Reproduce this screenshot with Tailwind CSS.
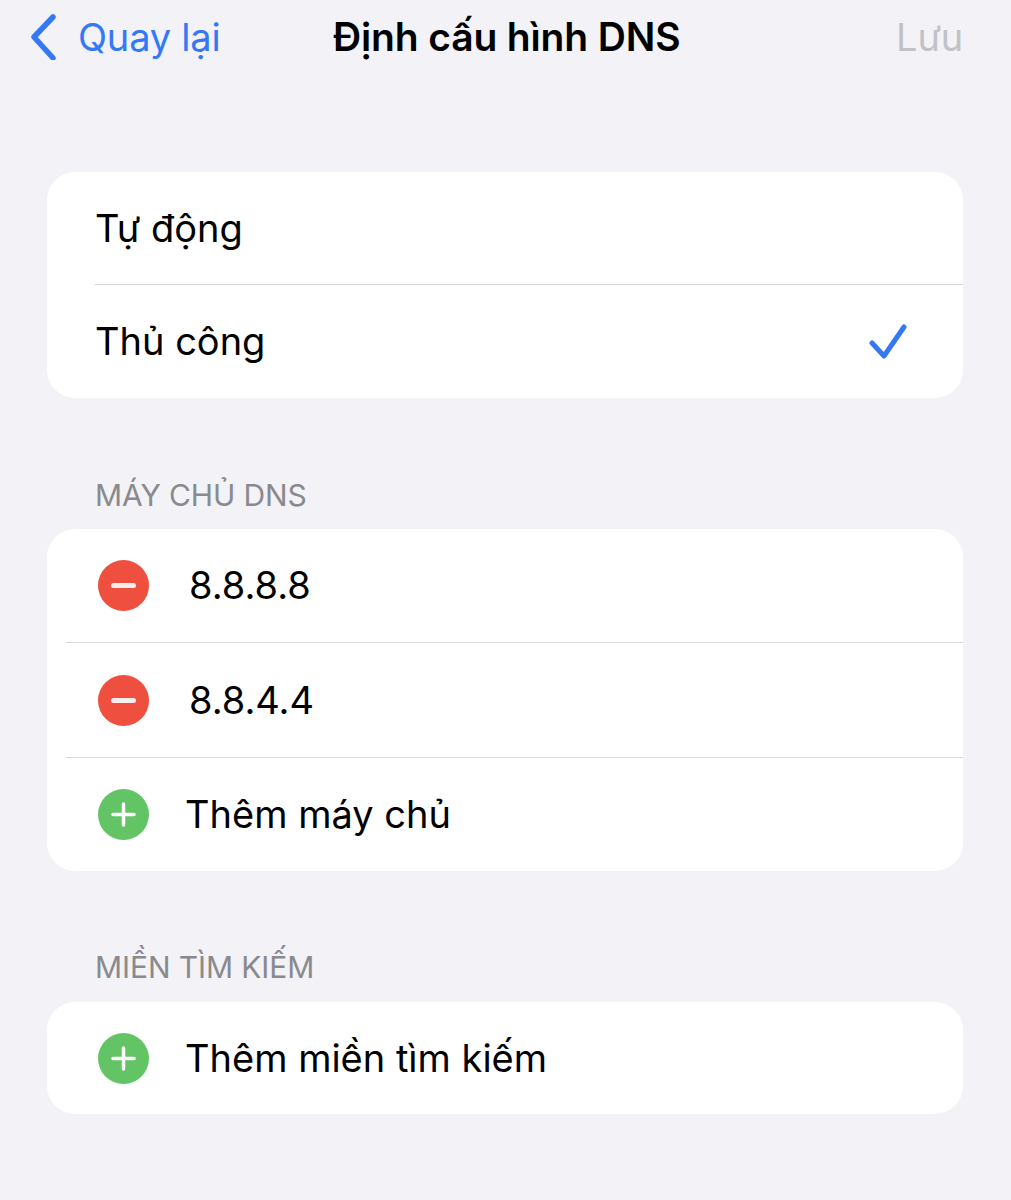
<!DOCTYPE html>
<html lang="vi">
<head>
    <meta charset="UTF-8">
    <meta name="viewport" content="width=device-width, initial-scale=1.0">
    <title>Định cấu hình DNS</title>
    <script src="https://cdn.jsdelivr.net/npm/@tailwindcss/browser@4"></script>
</head>
<body class="bg-[#f2f2f7] font-['Inter','Noto_Sans',sans-serif] text-black h-[1200px] overflow-hidden">
    <!-- nav bar -->
    <header class="relative h-[74px] flex items-center justify-between pl-[28px] pr-[48px] text-[38px] tracking-[-0.2px]">
        <a class="flex items-center gap-[16px] text-[#3478f6]">
            <svg width="34" height="46" viewBox="0 0 34 46" fill="none" stroke="#3478f6" stroke-width="5.5" stroke-linecap="round" stroke-linejoin="round"><path d="M25 3 L6 23 L25 44"/></svg>
            <span>Quay lại</span>
        </a>
        <h1 class="absolute left-[333px] font-semibold text-[39px] tracking-[-0.15px]">Định cấu hình DNS</h1>
        <span class="text-[#c2c2c6]">Lưu</span>
    </header>

    <main class="pl-[47px] pr-[48px] pt-[98px] text-[38px]">
        <section class="bg-white rounded-[28px] overflow-hidden">
            <div class="h-[112px] pl-[48px] flex items-center">Tự động</div>
            <div class="ml-[48px] h-px bg-[#d6d6d9]"></div>
            <div class="h-[113px] pl-[48px] pr-[54px] flex items-center justify-between">
                <span>Thủ công</span>
                <svg width="40" height="40" viewBox="0 0 40 40" fill="none" stroke="#3478f6" stroke-width="5" stroke-linecap="round" stroke-linejoin="round"><path d="M3 21 L15 34 L35 5"/></svg>
            </div>
        </section>

        <h2 class="mt-[79px] mb-[16px] pl-[48px] h-[36px] flex items-center text-[30px] tracking-[-0.1px] text-[#8a8a8e] font-normal">MÁY CHỦ DNS</h2>
        <section class="bg-white rounded-[28px] overflow-hidden">
            <div class="h-[113px] pl-[51px] flex items-center gap-[40px]">
                <span class="w-[51px] h-[51px] rounded-full bg-[#ee4f3e] flex items-center justify-center"><span class="w-[25px] h-[5px] rounded-full bg-white/90"></span></span>
                <span>8.8.8.8</span>
            </div>
            <div class="ml-[19px] h-px bg-[#d6d6d9]"></div>
            <div class="h-[114px] pl-[51px] flex items-center gap-[40px]">
                <span class="w-[51px] h-[51px] rounded-full bg-[#ee4f3e] flex items-center justify-center"><span class="w-[25px] h-[5px] rounded-full bg-white/90"></span></span>
                <span>8.8.4.4</span>
            </div>
            <div class="ml-[19px] h-px bg-[#d6d6d9]"></div>
            <div class="h-[113px] pl-[51px] flex items-center gap-[36px]">
                <span class="w-[51px] h-[51px] rounded-full bg-[#63c466] flex items-center justify-center">
                    <svg width="25" height="25" viewBox="0 0 25 25" stroke="white" stroke-width="3.5" stroke-linecap="round"><path d="M12.5 2 V23 M2 12.5 H23"/></svg>
                </span>
                <span>Thêm máy chủ</span>
            </div>
        </section>

        <h2 class="mt-[78px] mb-[17px] pl-[48px] h-[36px] flex items-center text-[30px] tracking-[-0.1px] text-[#8a8a8e] font-normal">MIỀN TÌM KIẾM</h2>
        <section class="bg-white rounded-[28px] overflow-hidden">
            <div class="h-[112px] pl-[51px] flex items-center gap-[36px]">
                <span class="w-[51px] h-[51px] rounded-full bg-[#63c466] flex items-center justify-center">
                    <svg width="25" height="25" viewBox="0 0 25 25" stroke="white" stroke-width="3.5" stroke-linecap="round"><path d="M12.5 2 V23 M2 12.5 H23"/></svg>
                </span>
                <span>Thêm miền tìm kiếm</span>
            </div>
        </section>
    </main>
</body>
</html>
